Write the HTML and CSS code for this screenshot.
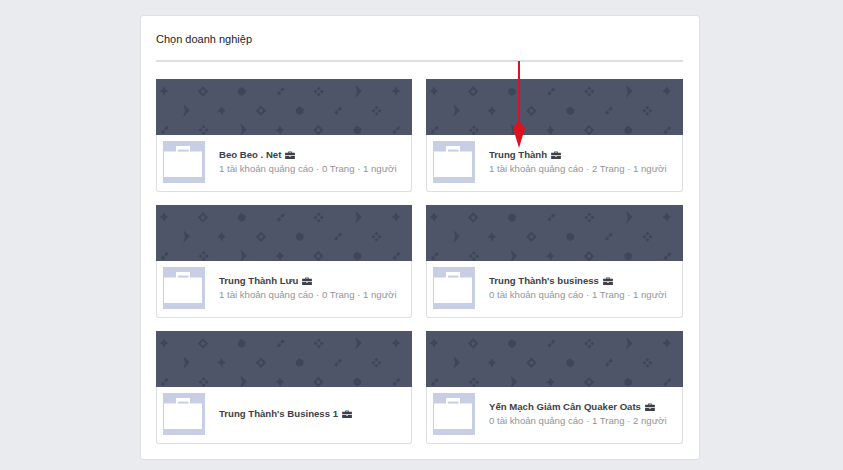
FILE: index.html
```html
<!DOCTYPE html>
<html lang="vi">
<head>
<meta charset="utf-8">
<title>Chọn doanh nghiệp</title>
<link rel="stylesheet" href="styles.css">
</head>
<body>
<svg class="defs" width="0" height="0" aria-hidden="true">
  <defs>
    <g id="a"><path d="M-.3-4.6 1.6-1.8 4-.2 1.8 1.4.2 4.8-1.4 1.6-4.6.2-1.8-1.6Z"/></g>
    <g id="b"><path fill-rule="evenodd" d="M0-5.2 5.2 0 0 5.2-5.2 0ZM0-2.4-2.4 0 0 2.4 2.4 0Z"/></g>
    <g id="c"><path d="M-.8-4.4 3.8-1.6 3 2.6-.6 4.4-4 2-4-1.8Z"/></g>
    <g id="d"><path d="M2.6-4.2 4.4-2 1.8.2-.2-1.4ZM-1.2-.6 .8 1.4-1 4-3.6 2.2Z"/></g>
    <g id="e"><path d="M0-5 2-3 0-1.2-2-3ZM3-2 5 0 3 2 1.2 0ZM-3-2-1.2 0-3 2-5 0ZM0 1.2 2 3 0 5-2 3Z"/></g>
    <g id="f"><path d="M-2.5-6.5 3.8-.5-2.8 6.5-1 .2Z"/></g>
    <g id="pattern" class="glyphs">
      <use href="#a" x="8" y="12"/><use href="#b" x="47" y="12.5"/><use href="#c" x="86" y="12.5"/><use href="#d" x="124.3" y="12.5"/><use href="#e" x="162.7" y="12.5"/><use href="#f" x="202" y="12.5"/><use href="#a" x="240" y="12"/>
      <use href="#f" x="30" y="31.7"/><use href="#a" x="65.7" y="31.7"/><use href="#b" x="105" y="31.7"/><use href="#c" x="144" y="31.7"/><use href="#d" x="181.7" y="31.7"/><use href="#e" x="220.5" y="31.7"/>
      <use href="#d" x="8.3" y="51"/><use href="#e" x="47.7" y="51"/><use href="#f" x="87" y="51"/><use href="#a" x="124" y="51"/><use href="#b" x="162.3" y="51"/><use href="#c" x="201.7" y="51"/><use href="#d" x="240" y="51"/>
    </g>
    <g id="case">
      <rect width="42" height="42" fill="#c8cee3"/>
      <path fill="#fff" d="M13 10.5V5h14v5.5h12V36H1V10.5Z"/>
      <rect x="15" y="8.6" width="10.5" height="2" fill="#c8cee3"/>
    </g>
    <g id="badge">
      <path d="M3.5 2V.5h4V2H11v2.8H0V2ZM4.5 2h2v-.7h-2Z" fill-rule="evenodd"/>
      <path d="M0 5.6h4.6v1h1.8v-1H11V9H0Z"/>
    </g>
  </defs>
</svg>
<main class="panel">
  <h1 class="title">Chọn doanh nghiệp</h1>
  <div class="grid">
    <a class="card">
      <svg class="cover" viewBox="0 0 256 56" preserveAspectRatio="xMinYMin slice"><use href="#pattern"/></svg>
      <div class="body">
        <svg class="avatar" viewBox="0 0 42 42"><use href="#case"/></svg>
        <div class="info">
          <div class="name">Beo Beo . Net <svg class="badge" viewBox="0 0 11 9"><use href="#badge"/></svg></div>
          <div class="meta">1 tài khoản quảng cáo · 0 Trang · 1 người</div>
        </div>
      </div>
    </a>
    <a class="card">
      <svg class="cover" viewBox="0 0 256 56" preserveAspectRatio="xMinYMin slice"><use href="#pattern"/></svg>
      <div class="body">
        <svg class="avatar" viewBox="0 0 42 42"><use href="#case"/></svg>
        <div class="info">
          <div class="name">Trung Thành <svg class="badge" viewBox="0 0 11 9"><use href="#badge"/></svg></div>
          <div class="meta">1 tài khoản quảng cáo · 2 Trang · 1 người</div>
        </div>
      </div>
    </a>
    <a class="card">
      <svg class="cover" viewBox="0 0 256 56" preserveAspectRatio="xMinYMin slice"><use href="#pattern"/></svg>
      <div class="body">
        <svg class="avatar" viewBox="0 0 42 42"><use href="#case"/></svg>
        <div class="info">
          <div class="name">Trung Thành Lưu <svg class="badge" viewBox="0 0 11 9"><use href="#badge"/></svg></div>
          <div class="meta">1 tài khoản quảng cáo · 0 Trang · 1 người</div>
        </div>
      </div>
    </a>
    <a class="card">
      <svg class="cover" viewBox="0 0 256 56" preserveAspectRatio="xMinYMin slice"><use href="#pattern"/></svg>
      <div class="body">
        <svg class="avatar" viewBox="0 0 42 42"><use href="#case"/></svg>
        <div class="info">
          <div class="name">Trung Thành's business <svg class="badge" viewBox="0 0 11 9"><use href="#badge"/></svg></div>
          <div class="meta">0 tài khoản quảng cáo · 1 Trang · 1 người</div>
        </div>
      </div>
    </a>
    <a class="card">
      <svg class="cover" viewBox="0 0 256 56" preserveAspectRatio="xMinYMin slice"><use href="#pattern"/></svg>
      <div class="body">
        <svg class="avatar" viewBox="0 0 42 42"><use href="#case"/></svg>
        <div class="info">
          <div class="name">Trung Thành's Business 1 <svg class="badge" viewBox="0 0 11 9"><use href="#badge"/></svg></div>
        </div>
      </div>
    </a>
    <a class="card">
      <svg class="cover" viewBox="0 0 256 56" preserveAspectRatio="xMinYMin slice"><use href="#pattern"/></svg>
      <div class="body">
        <svg class="avatar" viewBox="0 0 42 42"><use href="#case"/></svg>
        <div class="info">
          <div class="name">Yến Mạch Giảm Cân Quaker Oats <svg class="badge" viewBox="0 0 11 9"><use href="#badge"/></svg></div>
          <div class="meta">0 tài khoản quảng cáo · 1 Trang · 2 người</div>
        </div>
      </div>
    </a>
  </div>
  <svg class="arrow" viewBox="0 0 12 87"><path d="M5-1h2v62l5 6-6 20-6-20 5-6Z"/></svg>
</main>
</body>
</html>
```
FILE: styles.css
```css
html, body {
  margin: 0;
  height: 100%;
  background: #e9ebee;
  overflow: hidden;
}
.defs {
  position: absolute;
}
.panel {
  position: relative;
  box-sizing: border-box;
  width: 560px;
  height: 445px;
  margin: 15px 0 0 139.5px;
  padding: 0 15.5px;
  background: #fff;
  border: 1px solid #dddfe2;
  border-radius: 3px;
  font-family: "Liberation Sans", Arial, sans-serif;
}
.title {
  box-sizing: border-box;
  height: 46px;
  margin: 0 0 17px;
  padding-top: 16px;
  border-bottom: 2px solid #dddfe2;
  font-size: 11px;
  line-height: 14px;
  font-weight: 400;
  color: #1d2129;
}
.grid {
  display: grid;
  grid-template-columns: 256px 257px;
  grid-auto-rows: 113px;
  column-gap: 14px;
  row-gap: 13px;
}
.card {
  display: flex;
  flex-direction: column;
}
.cover {
  display: block;
  flex: none;
  width: 100%;
  height: 56px;
  background: #4f5568;
  fill: #40465a;
}
.glyphs {
  filter: blur(0.5px);
}
.body {
  box-sizing: border-box;
  flex: 1;
  display: flex;
  align-items: center;
  padding: 5px 6px 7px;
  border: 1px solid #dddfe2;
  border-top: 0;
  border-radius: 0 0 3px 3px;
  background: #fff;
}
.avatar {
  flex: none;
  width: 42px;
  height: 42px;
}
.info {
  margin-left: 14px;
  min-width: 0;
}
.name {
  font-size: 9.6px;
  line-height: 14px;
  font-weight: 700;
  color: #3d4048;
  white-space: nowrap;
}
.badge {
  width: 10px;
  height: 8px;
  margin-left: 1px;
  vertical-align: -1px;
  fill: #3d4048;
}
.meta {
  font-size: 9.6px;
  line-height: 14px;
  color: #90949c;
  white-space: nowrap;
}
.arrow {
  position: absolute;
  left: 372px;
  top: 45px;
  width: 12px;
  height: 87px;
  fill: #e2101f;
}
```
